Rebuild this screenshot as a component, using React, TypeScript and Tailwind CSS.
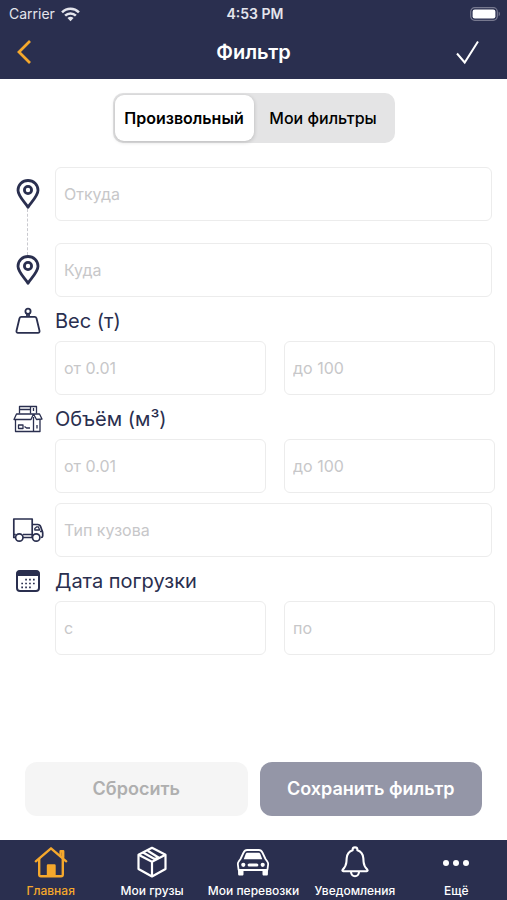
import { useState } from "react";
import type { ReactNode } from "react";

function WifiIcon() {
  return (
    <svg width="19" height="15" viewBox="0 0 18 14" fill="none" stroke="currentColor" strokeWidth="2.4" aria-hidden>
      <path d="M1 4.9a11.4 11.4 0 0 1 16 0" />
      <path d="M3.9 8.1a7.3 7.3 0 0 1 10.2 0" />
      <path d="M9 13.4 6.1 10.4a4.2 4.2 0 0 1 5.8 0Z" fill="currentColor" stroke="none" />
    </svg>
  );
}

function BatteryIcon() {
  return (
    <svg width="31" height="14" viewBox="0 0 31 14" fill="none" aria-hidden>
      <rect x="0.7" y="0.7" width="26.6" height="12.6" rx="4" stroke="#77798f" strokeWidth="1.2" />
      <rect x="2.6" y="2.5" width="22.8" height="9" rx="2.2" fill="#fff" />
      <path d="M28.7 4.8c1.6.6 1.6 3.8 0 4.4Z" fill="#77798f" />
    </svg>
  );
}

function PinIcon() {
  return (
    <svg width="24" height="30" viewBox="0 0 24 30" fill="none" stroke="currentColor" strokeWidth="2.8" strokeLinejoin="round" aria-hidden>
      <path d="M12 28.2C9.6 24 2 17.3 2 11.3a10 9.8 0 0 1 20 0c0 6-7.6 12.7-10 16.9Z" />
      <circle cx="12" cy="11" r="3.6" />
    </svg>
  );
}

function WeightIcon() {
  return (
    <svg width="26" height="28" viewBox="0 0 26 28" fill="none" stroke="currentColor" strokeWidth="1.8" strokeLinejoin="round" aria-hidden>
      <circle cx="13" cy="4.2" r="2.6" />
      <path d="M12 6.8v3M14 6.8v3" />
      <path d="M6.3 9.800h13.400c1 0 1.500.5 1.800 1.400l3 12.600c.3 1.300-.3 2-1.500 2H3c-1.200 0-1.800-.7-1.500-2l3-12.600c.3-.9.8-1.400 1.800-1.400Z" />
    </svg>
  );
}

function BoxesIcon() {
  return (
    <svg width="30" height="28" viewBox="0 0 30 28" fill="none" stroke="currentColor" strokeWidth="1.3" strokeLinejoin="round" aria-hidden>
      <path d="M6.500 8.500V1.500h17v7M6.500 4.500h11M17.500 1.500v7M20.500 3v3" />
      <path d="M3.500 9 1 14.500h17l2.500-5.500h-17ZM20.500 9l3 5.500 5.500-.5-2.500-5h-6Z" />
      <path d="M2.500 14.500v12h24.500v-12M20.500 12v14.500" />
      <path d="M5.500 20h4.500v3.500H5.500ZM11.500 21.500l2 1.500h3.500M24 20v3.500" />
    </svg>
  );
}

function TruckIcon() {
  return (
    <svg width="32" height="26" viewBox="0 0 32 26" fill="none" stroke="currentColor" strokeWidth="1.7" strokeLinejoin="round" aria-hidden>
      <path d="M3.500 20.500H1.800V2h18.400v18.500h-9.400M1.800 17.500h2M11 17.500h9" />
      <path d="M20.200 7.500h5.500c1.500 0 2.500.8 3 2.300l1.300 3.700c.5.8.7 1.500.7 2.500v3c0 1-.5 1.500-1.700 1.500" />
      <path d="M22.800 13v-1.500l2-1.700h1.500l1.400 3.200ZM28 14.500h2.200" strokeWidth="1.3" />
      <circle cx="7.3" cy="20.500" r="3.7" fill="#fff" />
      <circle cx="24.2" cy="20.500" r="3.7" fill="#fff" />
    </svg>
  );
}

function CalendarIcon() {
  return (
    <svg width="26" height="24" viewBox="0 0 26 24" fill="none" aria-hidden>
      <rect x="2" y="2" width="22" height="20" rx="3" stroke="currentColor" strokeWidth="2" />
      <path d="M1.500 7V4.500a3 3 0 0 1 3-3h17a3 3 0 0 1 3 3V7Z" fill="currentColor" />
      <path
        d="M10.200 10.700h10M6.300 14.500h14M6.300 18.300h10"
        stroke="currentColor"
        strokeWidth="1.700"
        strokeDasharray="1.700 2.200"
      />
    </svg>
  );
}

function HomeIcon() {
  return (
    <svg width="34" height="32" viewBox="0 0 34 32" fill="none" stroke="currentColor" strokeWidth="2.4" strokeLinecap="round" strokeLinejoin="round" aria-hidden>
      <path d="M1.800 15.300 17 2.300l15.200 13" />
      <path d="M5.200 13v15.500c0 1.100.6 1.700 1.700 1.700h20.200c1.100 0 1.700-.6 1.700-1.700V13" />
      <path d="M26.600 9.500V5.300h2.600v6" />
      <path d="M14 19.500h6.500v10H14Z" fill="currentColor" />
    </svg>
  );
}

function CargoIcon() {
  return (
    <svg width="34" height="32" viewBox="0 0 34 32" fill="none" stroke="currentColor" strokeWidth="2.2" strokeLinejoin="round" aria-hidden>
      <path d="M17 1.800 30.500 8.800v14.200L17 30.500 3.500 23V8.800Z" />
      <path d="M3.500 8.800 17 15.800l13.500-7M17 15.800v14.700" />
      <path d="M8 6.500 19.500 13l4-1.500L12.700 4.800" />
    </svg>
  );
}

function CarIcon() {
  return (
    <svg width="34" height="32" viewBox="0 0 34 32" fill="none" stroke="currentColor" strokeWidth="1.8" strokeLinejoin="round" aria-hidden>
      <path d="M4.500 13 7.600 6.500c.8-1.700 1.800-2.500 3.500-2.500h11.800c1.700 0 2.700.8 3.500 2.500l3.100 6.500 1.800 2.500c.8 1 1 2 .8 3.200l-.7 5.300H2.600l-.7-5.300c-.2-1.200 0-2.200.8-3.200Z" />
      <path d="M9.700 8c.4-1 .9-1.300 1.800-1.300h11c.9 0 1.400.3 1.800 1.300l2 5.200H7.700Z" fill="currentColor" stroke="none" />
      <path d="M2 23.500h5.500v4.500c0 1-.5 1.500-1.400 1.500H3.600c-1 0-1.500-.5-1.500-1.500ZM26.500 23.500H32l-.1 4.500c0 1-.5 1.500-1.500 1.500h-2.500c-.9 0-1.400-.5-1.400-1.500Z" fill="currentColor" stroke="none" />
      <circle cx="7.300" cy="18.800" r="2.100" fill="currentColor" stroke="none" />
      <circle cx="26.700" cy="18.800" r="2.100" fill="currentColor" stroke="none" />
      <path d="M13.200 19h7.600" strokeWidth="3.200" strokeLinecap="round" />
    </svg>
  );
}

function BellIcon() {
  return (
    <svg width="34" height="32" viewBox="0 0 34 32" fill="none" stroke="currentColor" strokeWidth="2.1" strokeLinecap="round" strokeLinejoin="round" aria-hidden>
      <path d="M5.200 25.200c-.8 0-1.100-.8-.6-1.400 2.600-2.600 3.600-4.400 3.800-7.800l.3-4c.3-3.800 2.300-6.600 5.900-7.800V3.800a2.400 2.400 0 0 1 4.800 0v.4c3.600 1.200 5.600 4 5.900 7.800l.3 4c.2 3.400 1.200 5.200 3.800 7.800.5.600.2 1.400-.6 1.400Z" />
      <path d="M13 26c.3 2.700 1.800 4.200 4 4.200s3.700-1.500 4-4.200" />
    </svg>
  );
}

function MoreIcon() {
  return (
    <svg width="34" height="32" viewBox="0 0 34 32" fill="currentColor" aria-hidden>
      <circle cx="7" cy="17" r="3" />
      <circle cx="17" cy="17" r="3" />
      <circle cx="27" cy="17" r="3" />
    </svg>
  );
}

const tabs = [
  { label: "Главная", icon: <HomeIcon />, active: true },
  { label: "Мои грузы", icon: <CargoIcon />, active: false },
  { label: "Мои перевозки", icon: <CarIcon />, active: false },
  { label: "Уведомления", icon: <BellIcon />, active: false },
  { label: "Ещё", icon: <MoreIcon />, active: false },
];

const modes = ["Произвольный", "Мои фильтры"];

function Field({ placeholder, label }: { placeholder: string; label?: string }) {
  return (
    <input
      type="text"
      placeholder={placeholder}
      aria-label={label ?? placeholder}
      className="h-[54px] w-full min-w-0 rounded-md border border-[#ececec] bg-white px-2 text-base text-[#2a2f4f] outline-none placeholder:text-[#c7c7c9] focus:border-[#2a2f4f]"
    />
  );
}

// Заголовок с иконкой и пара полей «от / до»
function RangeGroup({ title, icon, from, to }: { title: string; icon: ReactNode; from: string; to: string }) {
  return (
    <section>
      <div className="flex h-11 items-center pt-[3px]">
        <span className="flex w-[55px] shrink-0 justify-center">{icon}</span>
        <h2 className="text-xl">{title}</h2>
      </div>
      <div className="grid grid-cols-2 gap-[18px] pl-[55px] pr-3">
        <Field placeholder={from} label={`${title} ${from}`} />
        <Field placeholder={to} label={`${title} ${to}`} />
      </div>
    </section>
  );
}

export default function App() {
  const [mode, setMode] = useState(modes[0]);

  return (
    <div className="flex min-h-screen flex-col bg-white font-['Inter','Liberation_Sans',sans-serif] text-[#2a2f4f]">
      <header className="bg-[#2a2f4f] text-white">
        <div className="grid h-7 grid-cols-3 items-center pl-[9px] pr-[6px] text-sm">
          <span className="flex items-center gap-[6px] text-[#e4e5ec]">
            Carrier
            <WifiIcon />
          </span>
          <span className="text-center font-semibold text-[#e4e5ec]">4:53 PM</span>
          <span className="flex justify-end">
            <BatteryIcon />
          </span>
        </div>
        <div className="grid h-[51px] grid-cols-[60px_1fr_60px] items-center pb-1">
          <button type="button" aria-label="Назад" className="pl-4 text-[#f5a82c]">
            <svg width="16" height="26" viewBox="0 0 16 26" fill="none" stroke="currentColor" strokeWidth="2.8" aria-hidden>
              <path d="M14 2 3 13l11 11" />
            </svg>
          </button>
          <h1 className="text-center text-xl font-semibold">Фильтр</h1>
          <button type="button" aria-label="Применить" className="pl-2">
            <svg width="25" height="26" viewBox="0 0 25 26" fill="none" stroke="currentColor" strokeWidth="2" aria-hidden>
              <path d="M2 14.5 9.700 23.500 23 2.500" />
            </svg>
          </button>
        </div>
      </header>

      <main className="flex flex-1 flex-col">
        <div className="mx-auto mt-[14px] grid h-[50px] w-[282px] grid-cols-2 rounded-[10px] bg-[#e4e4e5] p-[2px] text-base text-black">
          {modes.map((m) => (
            <button
              key={m}
              type="button"
              aria-pressed={mode === m}
              onClick={() => setMode(m)}
              className={
                mode === m
                  ? "rounded-[9px] bg-white font-semibold shadow-[0_1px_4px_rgba(0,0,0,0.2)]"
                  : "rounded-[9px] font-medium"
              }
            >
              {m}
            </button>
          ))}
        </div>

        <form className="mt-6">
          <div className="flex pr-[15px]">
            <div className="flex w-[55px] shrink-0 flex-col items-center py-3">
              <PinIcon />
              <span className="w-0 flex-1 border-l border-dashed border-[#c9c9cf]" />
              <PinIcon />
            </div>
            <div className="flex flex-1 flex-col gap-[22px]">
              <Field placeholder="Откуда" />
              <Field placeholder="Куда" />
            </div>
          </div>

          <RangeGroup title="Вес (т)" icon={<WeightIcon />} from="от 0.01" to="до 100" />
          <RangeGroup title="Объём (м³)" icon={<BoxesIcon />} from="от 0.01" to="до 100" />

          <div className="mt-[10px] flex items-center pr-[15px]">
            <span className="flex w-[55px] shrink-0 justify-center">
              <TruckIcon />
            </span>
            <Field placeholder="Тип кузова" />
          </div>

          <RangeGroup title="Дата погрузки" icon={<CalendarIcon />} from="с" to="по" />
        </form>

        <div className="mt-auto grid grid-cols-2 gap-3 px-[25px] pb-6 text-lg font-semibold">
          <button type="button" className="h-[54px] rounded-xl bg-[#f5f5f5] text-[#afafaf]">
            Сбросить
          </button>
          <button type="button" className="h-[54px] rounded-xl bg-[#9496a7] text-white">
            Сохранить фильтр
          </button>
        </div>
      </main>

      <nav className="grid h-[60px] grid-cols-5 bg-[#2a2f4f] pt-[6px] text-xs font-medium text-white">
        {tabs.map((tab) => (
          <a
            key={tab.label}
            href="#"
            aria-current={tab.active ? "page" : undefined}
            className={
              tab.active
                ? "flex flex-col items-center gap-[5px] text-[#f5a82c]"
                : "flex flex-col items-center gap-[5px]"
            }
          >
            {tab.icon}
            <span className="whitespace-nowrap">{tab.label}</span>
          </a>
        ))}
      </nav>
    </div>
  );
}
